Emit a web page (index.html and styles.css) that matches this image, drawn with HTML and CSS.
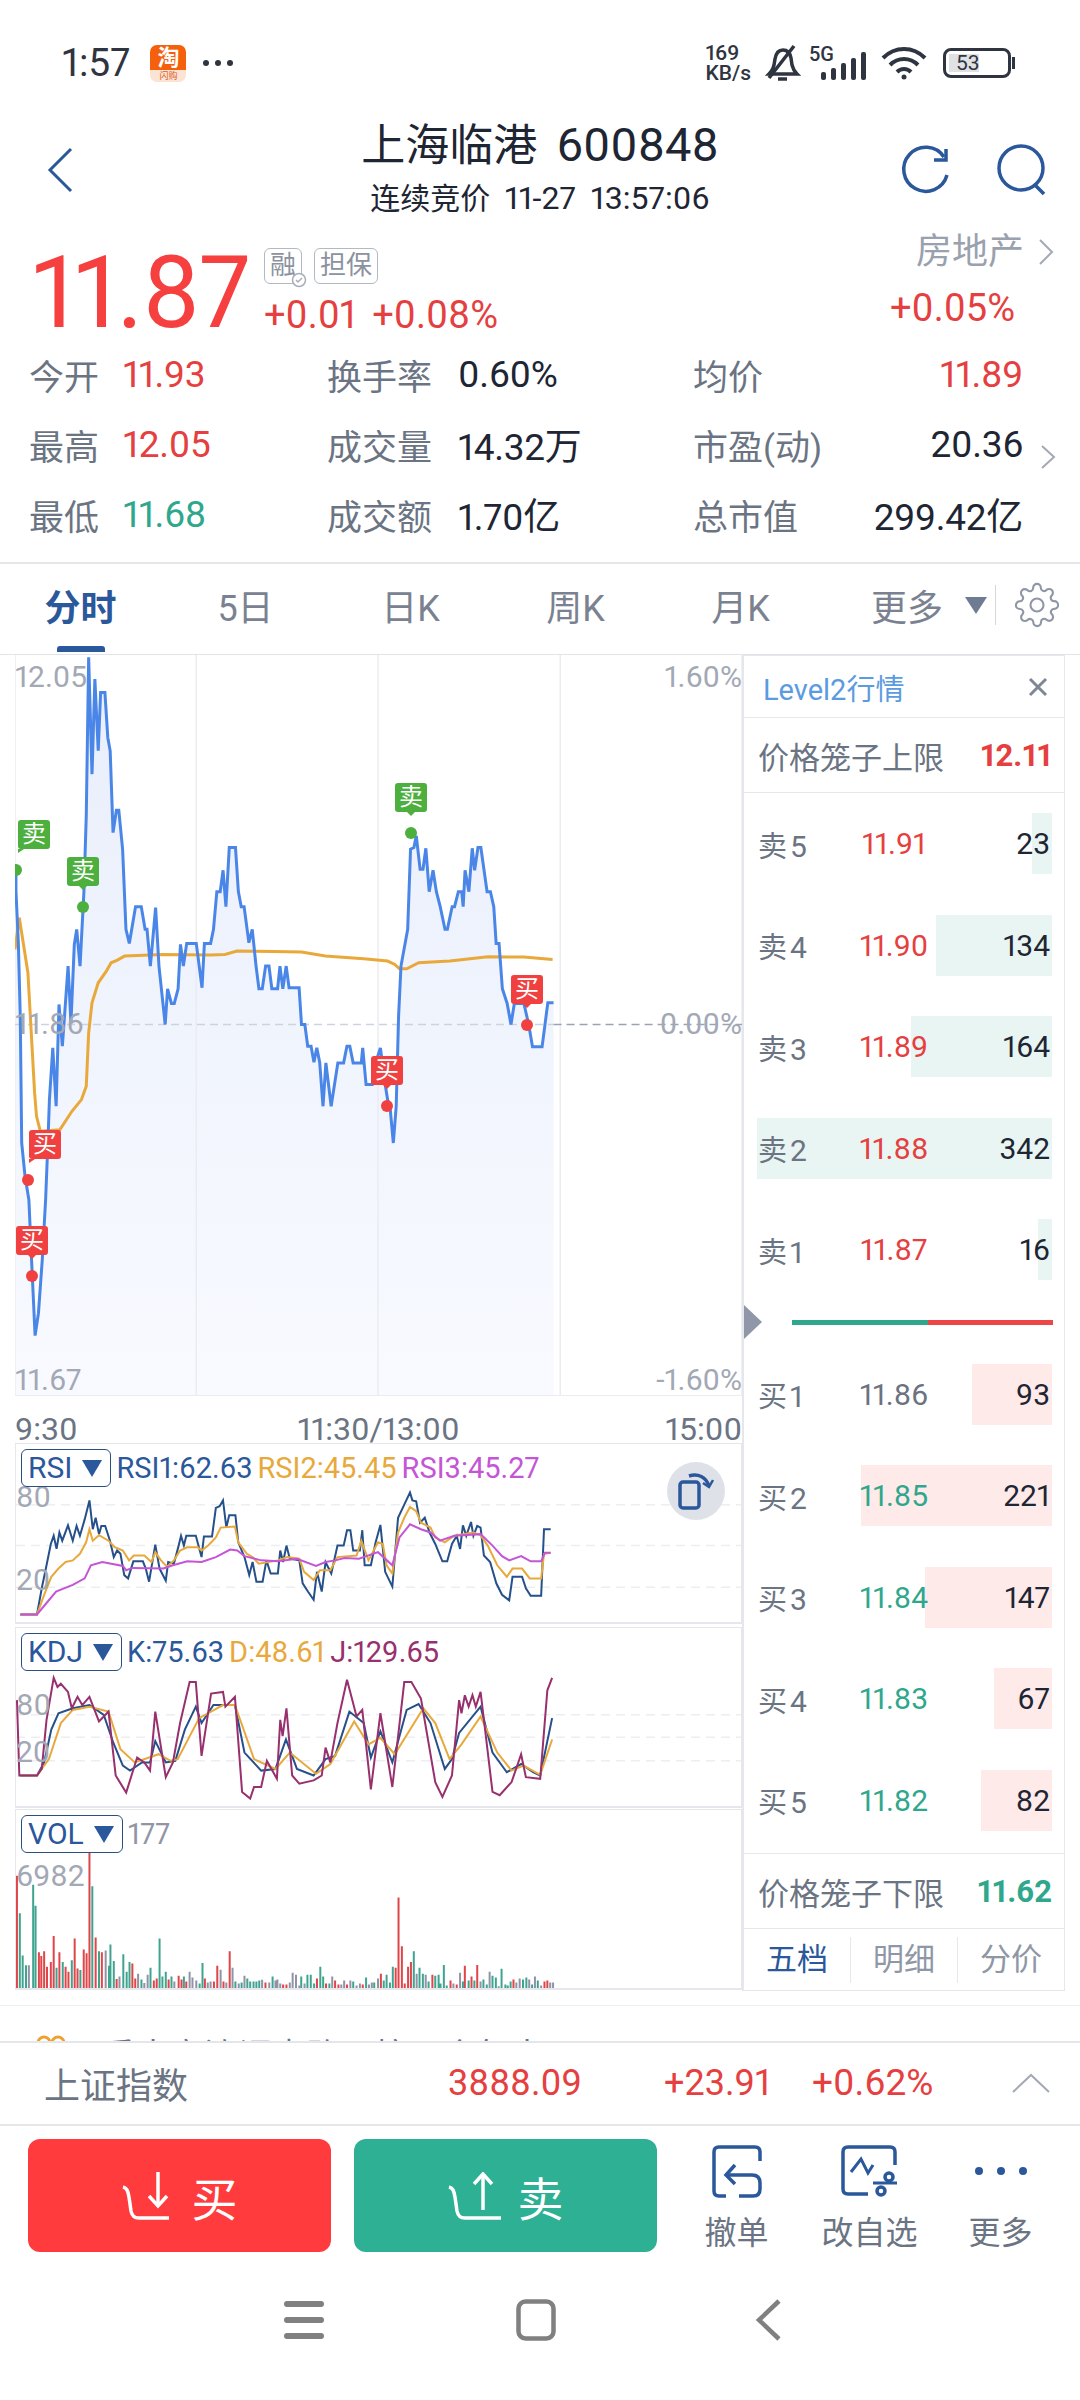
FILE: index.html
```html
<!DOCTYPE html>
<html lang="zh-CN">
<head>
    <meta charset="UTF-8">
    <meta name="viewport" content="width=device-width, initial-scale=1.0">
    <title>上海临港 600848</title>
    <link rel="stylesheet" href="styles.css">
</head>
<body>
    <div class="status-bar">
        <div class="status-left">
            <span class="clock">1:57</span>
            <span class="tao-icon"><b>淘</b><i>闪购</i></span>
            <svg class="status-dots" width="32" height="8" viewBox="0 0 32 8"><circle cx="4" cy="4" r="3"/><circle cx="16" cy="4" r="3"/><circle cx="28" cy="4" r="3"/></svg>
        </div>
        <div class="status-right">
            <span class="net-speed">169<br>KB/s</span>
            <svg class="bell" width="38" height="38" viewBox="0 0 38 38" fill="none" stroke="#2f3540" stroke-width="3.5"><path d="M6 30c4-4 5-7 6-15 1-6 4-9 8-9s7 3 8 8l1 7c1 4 3 7 5 9z"/><path d="M15 35h9"/><path d="M6 34 31 2"/></svg>
            <span class="five-g">5G</span>
            <svg class="signal" width="46" height="28" viewBox="0 0 46 28" fill="#2f3540"><rect x="0" y="20" width="5" height="8" rx="2"/><rect x="10" y="16" width="5" height="12" rx="2"/><rect x="20" y="11" width="5" height="17" rx="2"/><rect x="30" y="6" width="5" height="22" rx="2"/><rect x="40" y="0" width="5" height="28" rx="2"/></svg>
            <svg class="wifi" width="46" height="35" viewBox="0 0 46 35" fill="none" stroke="#2f3540" stroke-width="4"><path d="M2 12c12-12 30-12 42 0"/><path d="M9 19c8-8 20-8 28 0"/><path d="M16 26c4-4 10-4 14 0"/><circle cx="23" cy="31" r="2.5" fill="#2f3540" stroke="none"/></svg>
            <span class="battery"><span class="battery-level">53</span></span>
        </div>
    </div>

    <div class="stock-header">
        <svg class="back-icon" width="26" height="46" viewBox="0 0 26 46" fill="none" stroke="#2b579b" stroke-width="3"><path d="M24 2 3 23l21 21"/></svg>
        <div class="stock-title">
            <h1>上海临港 <span>600848</span></h1>
            <p>连续竞价 <span>11-27 13:57:06</span></p>
        </div>
        <div class="header-actions">
            <svg width="52" height="52" viewBox="0 0 52 52" fill="none" stroke="#2b579b" stroke-width="3.5"><path d="M47 31A22 22 0 1 1 44 13"/><path d="M46 5v11H34"/></svg>
            <svg width="52" height="52" viewBox="0 0 52 52" fill="none" stroke="#2b579b" stroke-width="3.5"><circle cx="25" cy="24" r="22"/><path d="m38 40 10 10"/></svg>
        </div>
    </div>

    <div class="quote">
        <div class="last-price">11.87</div>
        <div class="quote-mid">
            <div class="tags"><span class="tag tag-rong">融<svg width="16" height="16" viewBox="0 0 16 16" fill="#fff" stroke="#a8aeb9" stroke-width="1.5"><circle cx="8" cy="8" r="6.5"/><path d="m5 8 2 2 4-4" fill="none"/></svg></span><span class="tag">担保</span></div>
            <div class="change"><span>+0.01</span><span>+0.08%</span></div>
        </div>
        <div class="quote-side">
            <div class="sector">房地产<svg width="16" height="28" viewBox="0 0 16 28" fill="none" stroke="#a3a9b4" stroke-width="2"><path d="m2 2 12 12L2 26"/></svg></div>
            <div class="sector-change">+0.05%</div>
        </div>
    </div>

    <div class="stats">
        <div class="stat col-a"><span>今开</span><b class="up">11.93</b></div>
        <div class="stat col-b"><span>换手率</span><b>0.60%</b></div>
        <div class="stat col-c"><span>均价</span><b class="up">11.89</b></div>
        <div class="stat col-a"><span>最高</span><b class="up">12.05</b></div>
        <div class="stat col-b"><span>成交量</span><b>14.32万</b></div>
        <div class="stat col-c"><span>市盈(动)</span><b>20.36</b></div>
        <div class="stat col-a"><span>最低</span><b class="down">11.68</b></div>
        <div class="stat col-b"><span>成交额</span><b>1.70亿</b></div>
        <div class="stat col-c"><span>总市值</span><b>299.42亿</b></div>
        <svg class="stats-more" width="16" height="26" viewBox="0 0 16 26" fill="none" stroke="#a3a9b4" stroke-width="2"><path d="m2 2 12 11L2 24"/></svg>
    </div>

    <div class="tabs">
        <span class="tab active">分时</span>
        <span class="tab">5日</span>
        <span class="tab">日K</span>
        <span class="tab">周K</span>
        <span class="tab">月K</span>
        <span class="tab-more">更多</span>
        <span class="tab-arrow"></span>
        <span class="tab-sep"></span>
        <svg class="gear" width="46" height="46" viewBox="0 0 24 24" fill="none" stroke="#8f97a6" stroke-width="1.1"><circle cx="12" cy="12" r="3.4"/><path d="M19.4 15a1.65 1.65 0 0 0 .33 1.82l.06.06a2 2 0 0 1 0 2.83 2 2 0 0 1-2.83 0l-.06-.06a1.65 1.65 0 0 0-1.82-.33 1.65 1.65 0 0 0-1 1.51V21a2 2 0 0 1-2 2 2 2 0 0 1-2-2v-.09A1.65 1.65 0 0 0 9 19.4a1.65 1.65 0 0 0-1.82.33l-.06.06a2 2 0 0 1-2.83 0 2 2 0 0 1 0-2.83l.06-.06a1.65 1.65 0 0 0 .33-1.82 1.65 1.65 0 0 0-1.51-1H3a2 2 0 0 1-2-2 2 2 0 0 1 2-2h.09A1.65 1.65 0 0 0 4.6 9a1.65 1.65 0 0 0-.33-1.82l-.06-.06a2 2 0 0 1 0-2.83 2 2 0 0 1 2.83 0l.06.06a1.65 1.65 0 0 0 1.82.33H9a1.65 1.65 0 0 0 1-1.51V3a2 2 0 0 1 2-2 2 2 0 0 1 2 2v.09a1.65 1.65 0 0 0 1 1.51 1.65 1.65 0 0 0 1.82-.33l.06-.06a2 2 0 0 1 2.83 0 2 2 0 0 1 0 2.83l-.06.06a1.65 1.65 0 0 0-.33 1.82V9a1.65 1.65 0 0 0 1.51 1H21a2 2 0 0 1 2 2 2 2 0 0 1-2 2h-.09a1.65 1.65 0 0 0-1.51 1z"/></svg>
    </div>

    <div class="main">
        <div class="charts">
            <div class="price-chart">
                <svg class="plot" viewBox="31 18 1520 2220" preserveAspectRatio="none">
                    <defs>
                        <linearGradient id="area" gradientUnits="userSpaceOnUse" x1="0" y1="18" x2="0" y2="2238">
                            <stop offset="0" stop-color="#e8eefb"/>
                            <stop offset="1" stop-color="#f8faff"/>
                        </linearGradient>
                    </defs>
                    <polygon fill="url(#area)" points="33,2235 33,660 33,725 38,880 42,1100 45,1480 52,1580 60,1650 65,1810 73,2057 80,1990 88,1830 95,1650 100,1470 103,1350 110,1195 117,1370 123,1065 130,1190 142,950 148,1120 155,885 160,840 167,950 175,730 180,500 185,25 192,375 198,90 205,305 210,130 219,130 225,265 230,305 236,550 243,483 248,483 256,600 263,840 270,882 283,772 295,772 303,840 307,840 314,950 325,775 332,950 345,1125 350,1018 358,1062 364,1062 372,1018 377,885 383,950 390,882 410,882 422,1015 427,882 440,882 446,840 453,727 460,727 466,663 472,772 479,595 492,595 498,727 504,772 510,772 520,880 527,840 535,950 541,1018 548,1018 555,950 562,950 568,1018 580,1018 585,950 591,1018 598,950 604,1015 625,1015 630,1125 637,1125 643,1190 650,1190 656,1238 662,1195 668,1238 675,1370 681,1240 692,1370 706,1240 718,1240 725,1190 731,1190 738,1240 755,1240 758,1195 765,1305 778,1305 785,1240 795,1195 805,1305 810,1350 815,1370 822,1480 828,1370 833,1100 838,950 852,840 858,600 865,595 870,560 878,660 884,660 890,597 897,727 905,663 912,727 920,772 930,840 935,840 945,772 950,772 958,727 965,727 968,772 972,663 980,727 987,597 992,663 999,595 1005,595 1018,727 1025,727 1032,772 1037,882 1043,882 1050,1018 1060,1062 1068,1125 1075,1062 1095,1062 1105,1125 1113,1192 1133,1192 1145,1060 1157,1060 1157,2235"/>
                    <g class="grid-lines">
                        <path d="M31 18V2238M410 18V2238M790 18V2238M1171 18V2238M1551 18V2238M31 2237H1551"/>
                    </g>
                    <path class="mid-line" d="M31 1125H1157"/>
                    <path class="mid-line mid-right" d="M1157 1125H1551"/>
                    <polyline class="line-avg" points="31,900 40,805 58,970 65,1150 72,1330 76,1400 84,1445 125,1440 150,1385 170,1350 180,1310 185,1150 192,1060 205,1000 222,965 232,940 245,932 260,920 340,915 440,917 470,915 495,905 570,906 630,908 680,920 760,928 810,935 825,945 835,958 850,958 875,940 940,935 1020,922 1095,923 1155,930"/>
                    <polyline class="line-price" points="33,660 33,725 38,880 42,1100 45,1480 52,1580 60,1650 65,1810 73,2057 80,1990 88,1830 95,1650 100,1470 103,1350 110,1195 117,1370 123,1065 130,1190 142,950 148,1120 155,885 160,840 167,950 175,730 180,500 185,25 192,375 198,90 205,305 210,130 219,130 225,265 230,305 236,550 243,483 248,483 256,600 263,840 270,882 283,772 295,772 303,840 307,840 314,950 325,775 332,950 345,1125 350,1018 358,1062 364,1062 372,1018 377,885 383,950 390,882 410,882 422,1015 427,882 440,882 446,840 453,727 460,727 466,663 472,772 479,595 492,595 498,727 504,772 510,772 520,880 527,840 535,950 541,1018 548,1018 555,950 562,950 568,1018 580,1018 585,950 591,1018 598,950 604,1015 625,1015 630,1125 637,1125 643,1190 650,1190 656,1238 662,1195 668,1238 675,1370 681,1240 692,1370 706,1240 718,1240 725,1190 731,1190 738,1240 755,1240 758,1195 765,1305 778,1305 785,1240 795,1195 805,1305 810,1350 815,1370 822,1480 828,1370 833,1100 838,950 852,840 858,600 865,595 870,560 878,660 884,660 890,597 897,727 905,663 912,727 920,772 930,840 935,840 945,772 950,772 958,727 965,727 968,772 972,663 980,727 987,597 992,663 999,595 1005,595 1018,727 1025,727 1032,772 1037,882 1043,882 1050,1018 1060,1062 1068,1125 1075,1062 1095,1062 1105,1125 1113,1192 1133,1192 1145,1060 1157,1060"/>
                </svg>
                <span class="axis-label al-left" style="top:7px">12.05</span>
                <span class="axis-label al-right" style="top:7px">1.60%</span>
                <span class="axis-label al-left" style="top:354px">11.86</span>
                <span class="axis-label al-right" style="top:354px">0.00%</span>
                <span class="axis-label al-left" style="top:710px">11.67</span>
                <span class="axis-label al-right" style="top:710px">-1.60%</span>

                <span class="dot sell" style="left:1px;top:215px"></span>
                <span class="dot sell" style="left:68px;top:252px"></span>
                <span class="dot sell" style="left:396px;top:178px"></span>
                <span class="dot buy" style="left:512px;top:370px"></span>
                <span class="dot buy" style="left:372px;top:451px"></span>
                <span class="dot buy" style="left:13px;top:525px"></span>
                <span class="dot buy" style="left:17px;top:621px"></span>
                <span class="flag sell tail-left" style="left:3px;top:165px">卖</span>
                <span class="flag sell" style="left:52px;top:202px">卖</span>
                <span class="flag sell" style="left:380px;top:128px">卖</span>
                <span class="flag buy" style="left:496px;top:320px">买</span>
                <span class="flag buy" style="left:356px;top:401px">买</span>
                <span class="flag buy tail-left" style="left:14px;top:475px">买</span>
                <span class="flag buy" style="left:1px;top:571px">买</span>
            </div>

            <div class="time-axis"><span>9:30</span><span>11:30/13:00</span><span>15:00</span></div>

            <div class="panel">
                <svg class="plot" viewBox="31 40 1520 543" preserveAspectRatio="none">
                    <path class="guide" d="M31 225H1551M31 350H1551M31 477H1551"/>
                    <polyline class="thin c-rsi1" points="40,560 75,560 85,480 95,410 104,345 110,320 116,360 122,310 128,335 140,288 150,335 158,290 165,320 175,270 185,212 192,300 198,265 205,315 210,290 218,290 228,335 236,385 243,365 250,375 258,440 266,450 277,398 297,398 303,420 310,460 323,347 332,420 345,457 350,400 362,405 372,350 377,320 383,350 388,320 408,320 420,385 425,322 442,322 450,235 458,230 465,212 472,295 478,257 491,257 497,340 510,385 520,440 527,400 535,460 548,460 556,395 565,435 580,435 585,365 591,400 598,350 605,390 625,395 632,465 643,490 655,515 662,430 672,490 680,400 692,435 705,350 718,350 725,303 732,303 738,365 752,365 757,303 762,410 775,410 785,340 795,287 805,430 820,475 832,265 845,225 857,188 862,212 870,215 878,280 888,265 898,310 910,345 925,398 935,398 945,345 955,320 962,360 968,288 975,320 985,278 990,320 998,290 1005,295 1012,380 1025,400 1038,465 1050,500 1065,517 1072,445 1092,445 1100,480 1110,503 1132,503 1138,300 1152,300"/>
                    <polyline class="thin c-orange" points="40,560 75,560 90,500 105,445 120,420 135,400 150,395 165,375 178,340 185,300 192,335 205,318 225,335 238,355 255,365 268,395 278,380 300,380 315,400 323,370 335,395 348,415 362,395 375,365 390,355 412,355 420,365 435,348 450,325 460,295 490,292 497,340 515,375 527,385 540,405 580,395 600,385 625,390 635,430 655,455 668,425 690,425 705,385 745,380 755,335 770,395 790,340 800,345 808,410 820,435 832,310 845,265 857,232 870,245 880,280 900,295 910,325 930,340 950,320 990,310 1005,318 1020,350 1040,410 1060,445 1072,420 1092,420 1108,450 1132,450 1138,375 1152,372"/>
                    <polyline class="thin c-rsi3" points="40,560 75,560 95,525 115,490 150,470 175,450 188,410 212,400 255,412 262,425 275,418 340,420 360,410 390,398 420,400 450,385 480,362 495,365 510,382 545,395 580,398 620,390 660,412 680,400 700,395 720,388 750,390 790,370 820,410 835,325 857,285 880,300 900,310 920,335 950,320 1005,315 1030,350 1050,382 1065,395 1090,382 1110,398 1132,398 1140,372 1152,372"/>
                </svg>
                <span class="axis-label al-left" style="top:38px">80</span>
                <span class="axis-label al-left" style="top:121px">20</span>
                <div class="legend">
                    <span class="indicator">RSI<i></i></span>
                    <span class="c-blue">RSI1:62.63</span>
                    <span class="c-amber">RSI2:45.45</span>
                    <span class="c-violet">RSI3:45.27</span>
                </div>
                <span class="rotate-btn">
                    <svg width="40" height="38" viewBox="0 0 40 38" fill="none" stroke="#2b579b" stroke-width="3.5"><rect x="4" y="10" width="19" height="26" rx="3"/><path d="M13 4c9-3 17 1 20 10"/><path d="m37 8-4 7-6-4" stroke-width="2.5"/></svg>
                </span>
            </div>

            <div class="panel panel-kdj">
                <svg class="plot" viewBox="31 590 1520 543" preserveAspectRatio="none">
                    <path class="guide" d="M31 855H1551M31 923H1551M31 995H1551"/>
                    <polyline class="thin c-rsi1" points="40,1040 75,1040 90,1000 105,900 120,850 150,835 185,825 215,855 235,940 255,1010 270,1025 295,1000 312,1000 323,935 345,1000 365,995 385,900 408,830 420,880 445,825 490,825 510,970 545,1025 575,1020 597,930 620,1020 655,1040 680,990 700,980 730,845 760,880 775,985 795,905 820,1000 850,840 875,822 900,880 930,1020 945,990 960,910 1005,830 1030,970 1060,1030 1090,1005 1115,1030 1130,1040 1155,865"/>
                    <polyline class="thin c-orange" points="40,1040 75,1040 100,990 125,880 150,840 185,830 225,845 250,960 280,1000 330,975 355,995 370,990 415,865 465,825 490,825 530,990 575,1020 605,970 660,1035 690,1005 740,875 770,945 795,925 825,975 885,835 910,880 940,990 965,945 1005,860 1040,970 1070,1025 1095,1010 1130,1038 1155,930"/>
                    <polyline class="thin c-j" points="33,810 38,1040 75,1040 85,1020 95,870 110,742 118,770 125,760 140,785 148,835 160,800 170,825 185,800 205,875 225,845 240,1040 262,1092 285,985 300,1000 312,1025 323,845 345,1045 360,1000 375,880 395,755 408,755 420,980 440,790 465,785 470,830 490,800 505,1090 522,1110 530,1075 545,1075 557,995 578,1050 585,870 590,920 598,835 610,1040 625,1065 655,1055 672,1040 680,955 690,1000 705,880 725,748 745,860 757,840 775,1082 795,850 820,1075 845,755 860,755 880,805 910,1060 925,1105 945,1040 960,810 965,850 972,795 980,830 988,795 995,830 1005,785 1030,1090 1045,1100 1070,1060 1090,975 1100,1045 1130,1050 1145,780 1155,742"/>
                </svg>
                <span class="axis-label al-left" style="top:62px">80</span>
                <span class="axis-label al-left" style="top:109px">20</span>
                <div class="legend">
                    <span class="indicator">KDJ<i></i></span>
                    <span class="c-blue">K:75.63</span>
                    <span class="c-amber">D:48.61</span>
                    <span class="c-plum">J:129.65</span>
                </div>
            </div>

            <div class="panel panel-vol">
                <svg class="plot" viewBox="31 28 1520 547" preserveAspectRatio="none">
                    <path class="bar-red" d="M33 575V230M79 575V465M84 575V477M90 575V462M96 575V510M104 575V495M110 575V415M122 575V465M135 575V510M141 575V525M154 575V423M160 575V515M173 575V457M179 575V468M185 575V160M198 575V420M211 575V465M242 575V547M275 575V500M281 575V546M320 575V552M326 575V546M351 575V549M372 575V537M378 575V549M388 575V555M427 575V546M446 575V555M453 575V507M466 575V555M479 575V462M554 575V558M591 575V564M598 575V564M662 575V546M681 575V561M700 575V552M707 575V564M725 575V564M758 575V564M796 575V531M827 575V513M833 575V297M840 575V447M846 575V561M853 575V510M859 575V495M904 575V534M942 575V552M955 575V564M972 575V507M986 575V540M998 575V504M1074 575V549M1139 575V555M1145 575V552"/>
                    <path class="bar-green" d="M39 575V345M45 575V475M52 575V505M67 575V258M72 575V322M116 575V513M129 575V495M148 575V490M166 575V520M191 575V262M205 575V462M226 575V507M229 575V441M236 575V492M256 575V471M263 575V525M269 575V495M294 575V549M313 575V513M332 575V423M338 575V540M345 575V525M357 575V540M383 575V540M416 575V561M422 575V498M491 575V555M504 575V558M516 575V546M522 575V555M529 575V555M535 575V555M541 575V552M569 575V540M629 575V540M642 575V534M649 575V534M656 575V561M669 575V510M675 575V540M688 575V561M738 575V555M765 575V543M782 575V558M802 575V552M808 575V534M815 575V558M821 575V510M865 575V462M877 575V513M884 575V531M896 575V555M910 575V537M917 575V534M921 575V561M928 575V504M934 575V567M968 575V555M980 575V552M992 575V552M1011 575V549M1018 575V564M1030 575V537M1037 575V543M1049 575V516M1057 575V564M1062 575V567M1068 575V555M1094 575V549M1101 575V543M1113 575V564M1125 575V552"/>
                    <path class="bar-gray" d="M58 575V505M219 575V460M248 575V540M287 575V531M300 575V560M307 575V534M363 575V555M395 575V525M401 575V543M409 575V552M433 575V558M439 575V555M460 575V519M472 575V558M485 575V513M498 575V561M510 575V537M547 575V550M562 575V558M575 575V552M579 575V549M585 575V561M605 575V558M611 575V528M618 575V534M625 575V567M636 575V561M694 575V540M713 575V564M719 575V552M732 575V552M745 575V567M752 575V561M771 575V564M777 575V558M790 575V546M871 575V531M890 575V534M948 575V561M962 575V528M1005 575V555M1024 575V525M1043 575V570M1080 575V558M1087 575V546M1107 575V549M1119 575V540M1132 575V567M1151 575V558M1157 575V558"/>
                </svg>
                <span class="axis-label al-left" style="top:51px">6982</span>
                <div class="legend">
                    <span class="indicator">VOL<i></i></span>
                    <span class="c-gray">177</span>
                </div>
            </div>
        </div>

        <div class="book">
            <div class="book-head"><span>Level2行情</span><svg width="20" height="20" viewBox="0 0 20 20" stroke="#7f8795" stroke-width="3"><path d="m2 2 16 16M18 2 2 18"/></svg></div>
            <div class="cage"><span>价格笼子上限</span><b class="up">12.11</b></div>
            <div class="book-row"><i class="depth ask" style="width:20px"></i><span>卖<em>5</em></span><span class="up">11.91</span><span class="qty">23</span></div>
            <div class="book-row"><i class="depth ask" style="width:116px"></i><span>卖<em>4</em></span><span class="up">11.90</span><span class="qty">134</span></div>
            <div class="book-row"><i class="depth ask" style="width:141px"></i><span>卖<em>3</em></span><span class="up">11.89</span><span class="qty">164</span></div>
            <div class="book-row"><i class="depth ask" style="width:295px"></i><span>卖<em>2</em></span><span class="up">11.88</span><span class="qty">342</span></div>
            <div class="book-row"><i class="depth ask" style="width:14px"></i><span>卖<em>1</em></span><span class="up">11.87</span><span class="qty">16</span></div>
            <div class="book-split"><span class="split-arrow"></span><span class="split-bar"></span></div>
            <div class="book-row"><i class="depth bid" style="width:80px"></i><span>买<em>1</em></span><span class="flat">11.86</span><span class="qty">93</span></div>
            <div class="book-row"><i class="depth bid" style="width:191px"></i><span>买<em>2</em></span><span class="down">11.85</span><span class="qty">221</span></div>
            <div class="book-row"><i class="depth bid" style="width:127px"></i><span>买<em>3</em></span><span class="down">11.84</span><span class="qty">147</span></div>
            <div class="book-row"><i class="depth bid" style="width:58px"></i><span>买<em>4</em></span><span class="down">11.83</span><span class="qty">67</span></div>
            <div class="book-row"><i class="depth bid" style="width:71px"></i><span>买<em>5</em></span><span class="down">11.82</span><span class="qty">82</span></div>
            <div class="cage cage-low"><span>价格笼子下限</span><b class="down">11.62</b></div>
            <div class="book-tabs"><span class="active">五档</span><span>明细</span><span>分价</span></div>
        </div>
    </div>

    <div class="news">
        <svg width="30" height="14" viewBox="0 0 30 14" fill="none" stroke="#f0a030" stroke-width="3"><circle cx="8" cy="8" r="6"/><circle cx="22" cy="8" r="6"/></svg>
        <span>重大交流调查路，校研会年大</span>
    </div>

    <div class="index-bar">
        <span class="index-name">上证指数</span>
        <span class="index-price up">3888.09</span>
        <span class="index-change up">+23.91</span>
        <span class="index-pct up">+0.62%</span>
        <svg width="38" height="20" viewBox="0 0 38 20" fill="none" stroke="#a3a9b4" stroke-width="2"><path d="M1 19 19 2l18 17"/></svg>
    </div>

    <div class="trade">
        <div class="trade-btn btn-buy">
            <svg width="56" height="48" viewBox="0 0 56 48" fill="none" stroke="#fff" stroke-width="3.5"><path d="M1 15c4 1 5 4 6 10l2 14c1 5 3 7 8 7h30"/><path d="M36 0v34"/><path d="m27 24 9 10 9-10"/></svg>
            <span>买</span>
        </div>
        <div class="trade-btn btn-sell">
            <svg width="56" height="48" viewBox="0 0 56 48" fill="none" stroke="#fff" stroke-width="3.5"><path d="M1 15c4 1 5 4 6 10l2 14c1 5 3 7 8 7h36"/><path d="M35 38V2"/><path d="m26 12 9-10 9 10"/></svg>
            <span>卖</span>
        </div>
        <div class="action">
            <svg width="54" height="53" viewBox="0 0 54 53" fill="none" stroke="#2b579b" stroke-width="3.5"><path d="M50 16V7q0-5-5-5H9Q4 2 4 7v39q0 5 5 5h7"/><path d="m25 20-9 10 9 9"/><path d="M16 30h26q8 0 8 8v6q0 7-7 7H29"/></svg>
            <span>撤单</span>
        </div>
        <div class="action">
            <svg width="62" height="53" viewBox="0 0 62 53" fill="none" stroke="#2b579b" stroke-width="3.5"><path d="M56 20V7q0-5-5-5H9Q4 2 4 7v37q0 5 5 5h20"/><path d="m12 27 10-13 7 14 5-8" stroke-width="3"/><circle cx="50" cy="32" r="4"/><circle cx="42" cy="46" r="4"/><path d="M34 38h24" stroke-width="3"/></svg>
            <span>改自选</span>
        </div>
        <div class="action">
            <svg width="54" height="53" viewBox="0 0 54 53" fill="#2b579b"><circle cx="5" cy="26" r="4"/><circle cx="27" cy="26" r="4"/><circle cx="49" cy="26" r="4"/></svg>
            <span>更多</span>
        </div>
    </div>

    <div class="nav-bar">
        <span class="nav-cell"><svg width="40" height="38" viewBox="0 0 40 38" fill="#808080"><rect y="0" width="40" height="6" rx="3"/><rect y="16" width="40" height="6" rx="3"/><rect y="32" width="40" height="6" rx="3"/></svg></span>
        <span class="nav-cell"><svg width="40" height="42" viewBox="0 0 40 42" fill="none" stroke="#808080" stroke-width="4.5"><rect x="2.5" y="2.5" width="35" height="37" rx="7"/></svg></span>
        <span class="nav-cell"><svg width="26" height="42" viewBox="0 0 26 42" fill="none" stroke="#808080" stroke-width="4.5"><path d="M24 2 4 21l20 19"/></svg></span>
    </div>
</body>
</html>
```

FILE: styles.css
```css
* {
    box-sizing: border-box;
}
body {
    margin: 0;
    width: 1080px;
    height: 2400px;
    overflow: hidden;
    background-color: white;
    color: #1e2533;
    font-family: Roboto, "Noto Sans CJK SC", sans-serif;
    font-variant-numeric: proportional-nums;
}
h1, p {
    margin: 0;
    font-weight: normal;
}
i, em, b {
    font-style: normal;
    font-weight: normal;
}
svg {
    display: block;
}
.up { color: #e5403f; }
.down { color: #2fa78d; }
.flat { color: #6b7280; }

/* status bar */
.status-bar {
    height: 122px;
    padding: 4px 69px 0 62px;
    display: flex;
    justify-content: space-between;
    align-items: center;
    color: #2f3540;
}
.status-left, .status-right {
    display: flex;
    align-items: center;
}
.clock {
    font-size: 39px;
}
.tao-icon {
    width: 36px;
    height: 37px;
    margin-left: 20px;
    border-radius: 7px;
    overflow: hidden;
    background-color: #fde3d2;
    text-align: center;
}
.tao-icon b {
    display: block;
    height: 25px;
    background-color: #f4600c;
    color: white;
    font-size: 22px;
    line-height: 25px;
    font-weight: bold;
}
.tao-icon i {
    display: block;
    font-size: 9px;
    line-height: 12px;
    color: #d9622a;
}
.status-dots {
    margin-left: 16px;
    fill: #2f3540;
}
.net-speed {
    font-size: 21px;
    line-height: 20px;
    font-weight: 500;
}
.bell {
    margin-left: 12px;
}
.five-g {
    font-size: 20px;
    font-weight: 500;
    margin: -18px -13px 0 8px;
}
.signal {
    margin-top: 6px;
}
.wifi {
    margin-left: 14px;
}
.battery {
    width: 68px;
    height: 30px;
    margin-left: 16px;
    padding: 3px;
    border: 3px solid #2f3540;
    border-radius: 8px;
    position: relative;
}
.battery::after {
    content: "";
    position: absolute;
    right: -7px;
    top: 6px;
    width: 3px;
    height: 12px;
    background-color: #2f3540;
}
.battery-level {
    display: block;
    width: 53%;
    height: 18px;
    padding-left: 7px;
    background-color: #dfe1e4;
    font-size: 21px;
    line-height: 18px;
}

/* title */
.stock-header {
    height: 96px;
    padding: 0 47px;
    display: grid;
    grid-template-columns: 1fr auto 1fr;
    align-items: center;
}
.stock-title {
    text-align: center;
}
.stock-title h1 {
    font-size: 44px;
    line-height: 44px;
    word-spacing: 8px;
}
.stock-title h1 span {
    font-size: 47px;
}
.stock-title p {
    margin-top: 12px;
    font-size: 30px;
    line-height: 36px;
    word-spacing: 7px;
}
.stock-title p span {
    font-size: 32px;
}
.header-actions {
    display: flex;
    justify-content: flex-end;
    gap: 44px;
    margin-right: -15px;
}

/* quote */
.quote {
    height: 121px;
    padding: 12px 26px 0 32px;
    display: flex;
    position: relative;
}
.last-price {
    width: 232px;
    margin-top: 13px;
    color: #f5403f;
    font-size: 100px;
    line-height: 100px;
    letter-spacing: -1px;
}
.quote-mid {
    margin-top: 18px;
    flex: 1;
}
.tags {
    display: flex;
    gap: 12px;
}
.tag {
    height: 36px;
    padding: 0 5px;
    border: 1.5px solid #b3b8c2;
    border-radius: 6px;
    color: #8b92a0;
    font-size: 26px;
    line-height: 32px;
    position: relative;
}
.tag-rong svg {
    position: absolute;
    right: -6px;
    bottom: -5px;
}
.change {
    margin-top: 10px;
    display: flex;
    gap: 16px;
    color: #e5403f;
    font-size: 38px;
    line-height: 42px;
}
.quote-side {
    text-align: right;
}
.sector {
    display: flex;
    justify-content: flex-end;
    align-items: center;
    gap: 14px;
    color: #9aa1ae;
    font-size: 36px;
    line-height: 44px;
}
.sector-change {
    margin: 12px 39px 0 0;
    color: #e5403f;
    font-size: 38px;
    line-height: 44px;
}

/* stats */
.stats {
    height: 225px;
    padding-left: 29px;
    border-bottom: 2px solid #e4e6ea;
    display: grid;
    grid-template-columns: 298px 366px 330px;
    grid-auto-rows: 70px;
    align-items: center;
    position: relative;
    font-size: 35px;
}
.stat {
    display: flex;
    align-items: center;
}
.stat span {
    color: #6b7483;
}
.stat b {
    font-size: 37px;
    letter-spacing: -0.3px;
}
.col-a span {
    width: 94px;
}
.col-b span {
    width: 131px;
}
.col-c {
    justify-content: space-between;
}
.stats-more {
    position: absolute;
    left: 1040px;
    top: 105px;
}

/* tabs */
.tabs {
    height: 91px;
    padding-bottom: 8px;
    border-bottom: 1px solid #e2e4e8;
    display: flex;
    align-items: center;
    color: #7a8291;
    font-size: 36px;
}
.tab {
    width: 165px;
    text-align: center;
    position: relative;
}
.tab:first-child {
    margin-left: -2px;
}
.tab.active {
    color: #2b579b;
    font-weight: bold;
}
.tab.active::after {
    content: "";
    position: absolute;
    left: 59px;
    bottom: -21px;
    width: 48px;
    height: 6px;
    border-radius: 3px 3px 0 0;
    background-color: #2b579b;
}
.tab-more {
    margin-left: 48px;
}
.tab-arrow {
    margin-left: 22px;
    border-left: 11px solid transparent;
    border-right: 11px solid transparent;
    border-top: 17px solid #6e7b92;
}
.tab-sep {
    width: 1px;
    height: 40px;
    margin-left: 8px;
    background-color: #d5d8de;
}
.gear {
    margin-left: 18px;
}

/* left charts */
.main {
    margin-left: 15px;
    width: 1050px;
    height: 1336px;
    display: flex;
}
.charts {
    width: 727px;
    flex-shrink: 0;
}
.plot {
    position: absolute;
    left: 0;
    top: 0;
    width: 100%;
    height: 100%;
}
.plot polyline, .plot path {
    vector-effect: non-scaling-stroke;
    fill: none;
}
.price-chart {
    height: 741px;
    position: relative;
    overflow: hidden;
}
.grid-lines path {
    stroke: #eaecf0;
    stroke-width: 1.5px;
}
.mid-line {
    stroke: #ccd2de;
    stroke-width: 1.5px;
    stroke-dasharray: 8 5;
}
.mid-right {
    stroke: #9aa3b5;
}
.line-price {
    stroke: #4a86e8;
    stroke-width: 3px;
}
.line-avg {
    stroke: #e9a83a;
    stroke-width: 3px;
}
.axis-label {
    position: absolute;
    color: #a3a8b5;
    font-size: 30px;
    line-height: 30px;
}
.al-left {
    left: 0;
}
.al-right {
    right: 0;
}
.dot {
    position: absolute;
    width: 12px;
    height: 12px;
    margin: -6px 0 0 -6px;
    border-radius: 50%;
}
.dot.sell {
    background-color: #4caf3e;
}
.dot.buy {
    background-color: #f04040;
}
.flag {
    position: absolute;
    width: 32px;
    height: 29px;
    border-radius: 3px;
    color: white;
    font-size: 24px;
    line-height: 29px;
    text-align: center;
}
.flag::after {
    content: "";
    position: absolute;
    left: 12px;
    bottom: -4px;
    border-left: 4px solid transparent;
    border-right: 4px solid transparent;
    border-top: 4px solid;
}
.flag.tail-left::after {
    left: 0;
    bottom: -4px;
    border-left: 0;
    border-right: 6px solid transparent;
    border-top: 4px solid;
}
.flag.sell {
    background-color: #4caf3e;
}
.flag.sell::after {
    color: #4caf3e;
}
.flag.buy {
    background-color: #f04040;
}
.flag.buy::after {
    color: #f04040;
}
.time-axis {
    height: 47px;
    padding-top: 14px;
    display: grid;
    grid-template-columns: 1fr auto 1fr;
    align-items: center;
    color: #6b7483;
    font-size: 32px;
}
.time-axis span:last-child {
    text-align: right;
}
.panel {
    height: 181px;
    margin-bottom: 3px;
    position: relative;
    border: 1px solid #e5e7ec;
    border-bottom-width: 2px;
}
.panel-kdj {
    margin-bottom: 1px;
}
.panel-vol {
    height: 181px;
    margin-bottom: 0;
}
.guide {
    stroke: #eceef2;
    stroke-width: 1.5px;
    stroke-dasharray: 9 6;
}
.thin {
    stroke-width: 2px;
}
.c-rsi1 { stroke: #26508a; }
.c-orange { stroke: #e8a93c; }
.c-rsi3 { stroke: #c455d6; }
.c-j { stroke: #98306e; }
.bar-red, .bar-green, .bar-gray {
    stroke-width: 2px;
}
.bar-red { stroke: #e0454a; }
.bar-green { stroke: #3fa48f; }
.bar-gray { stroke: #8f93a5; }
.legend {
    position: relative;
    height: 38px;
    margin: 5px 0 0 5px;
    display: flex;
    align-items: center;
    gap: 5px;
    font-size: 29px;
}
.indicator {
    height: 38px;
    padding: 0 8px 0 6px;
    border: 1px solid #2b4f7e;
    border-radius: 6px;
    display: flex;
    align-items: center;
    gap: 10px;
    color: #2b579b;
    font-size: 30px;
    line-height: 36px;
}
.indicator i {
    border-left: 10px solid transparent;
    border-right: 10px solid transparent;
    border-top: 17px solid #2b579b;
}
.c-blue { color: #2b579b; }
.c-amber { color: #e8a93c; }
.c-violet { color: #c455d6; }
.c-plum { color: #98306e; }
.c-gray { color: #8f95a3; }
.rotate-btn {
    position: absolute;
    left: 651px;
    top: 18px;
    width: 58px;
    height: 58px;
    border-radius: 50%;
    background-color: #dfe1e8;
    display: flex;
    align-items: center;
    justify-content: center;
}

/* order book */
.book {
    width: 323px;
    border: 1px solid #e5e7ec;
    border-left-width: 2px;
    font-size: 29px;
    color: #6b7483;
}
.book-head {
    height: 62px;
    padding: 0 16px 0 19px;
    border-bottom: 1px solid #e5e7ec;
    display: flex;
    align-items: center;
    justify-content: space-between;
    color: #5b9bdf;
    font-size: 29px;
}
.cage {
    height: 75px;
    padding: 0 12px 0 14px;
    border-bottom: 1px solid #e5e7ec;
    display: flex;
    align-items: center;
    justify-content: space-between;
    font-size: 31px;
}
.cage b {
    font-weight: bold;
}
.cage-low {
    height: 76px;
    border-top: 1px solid #e5e7ec;
    margin-top: 2px;
}
.book-row {
    height: 101.5px;
    padding: 0 14px 0 14px;
    display: grid;
    grid-template-columns: 90px 92px 1fr;
    align-items: center;
    position: relative;
}
.book-row span {
    position: relative;
}
.book-row span:nth-of-type(2) {
    text-align: center;
    font-size: 30px;
}
.book-row em {
    margin-left: 3px;
    font-size: 30px;
}
.depth {
    position: absolute;
    right: 12px;
    top: 20px;
    height: 61px;
}
.depth.ask {
    background-color: #e8f5f2;
}
.depth.bid {
    background-color: #ffeaea;
}
.qty {
    color: #1e2533;
    font-size: 30px;
    text-align: right;
}
.book-split {
    height: 43px;
    display: flex;
    align-items: center;
}
.split-arrow {
    border-top: 17px solid transparent;
    border-bottom: 17px solid transparent;
    border-left: 18px solid #8f97a9;
}
.split-bar {
    width: 261px;
    height: 5px;
    margin-left: 30px;
    background: linear-gradient(to right, #2fa78d 52%, #ec4646 52%);
}
.book-tabs {
    height: 61px;
    display: flex;
    align-items: center;
    color: #8f97a6;
    font-size: 31px;
}
.book-tabs span {
    flex: 1;
    height: 46px;
    line-height: 46px;
    text-align: center;
    border-left: 1px solid #e5e7ec;
}
.book-tabs span:first-child {
    border-left: 0;
}
.book-tabs .active {
    color: #2b579b;
}

/* bottom */
.news {
    height: 36px;
    margin-top: 14px;
    padding: 33px 0 0 36px;
    border-top: 1px solid #eceef1;
    overflow: hidden;
    display: flex;
    align-items: flex-start;
    gap: 36px;
    color: #6b7483;
    font-size: 34px;
    line-height: 34px;
}
.news svg {
    margin-top: -4px;
}
.index-bar {
    height: 85px;
    padding: 0 0 2px 44px;
    border-top: 2px solid #e4e6ea;
    border-bottom: 2px solid #e4e6ea;
    display: flex;
    align-items: center;
    font-size: 36px;
}
.index-name {
    width: 404px;
    color: #6b7483;
}
.index-price {
    width: 216px;
}
.index-change {
    width: 148px;
}
.index-pct {
    width: 200px;
    font-size: 37px;
}
.trade {
    height: 128px;
    padding: 13px 0 0 28px;
    display: flex;
}
.trade-btn {
    width: 303px;
    height: 113px;
    border-radius: 12px;
    display: flex;
    align-items: center;
    justify-content: center;
    gap: 14px;
    color: white;
    font-size: 46px;
}
.btn-buy {
    background-color: #ff3b3d;
    margin-right: 23px;
}
.btn-sell {
    background-color: #2db093;
    margin-right: 13px;
}
.action {
    width: 133px;
    padding-top: 6px;
    display: flex;
    flex-direction: column;
    align-items: center;
    color: #6b7483;
    font-size: 32px;
}
.action span {
    margin-top: 15px;
    line-height: 40px;
}
.action:last-child {
    margin-left: -2px;
}
.nav-bar {
    height: 146px;
    padding: 0 8px 14px 0;
    display: flex;
    align-items: center;
    justify-content: center;
}
.nav-cell {
    width: 232px;
    display: flex;
    justify-content: center;
}
```
